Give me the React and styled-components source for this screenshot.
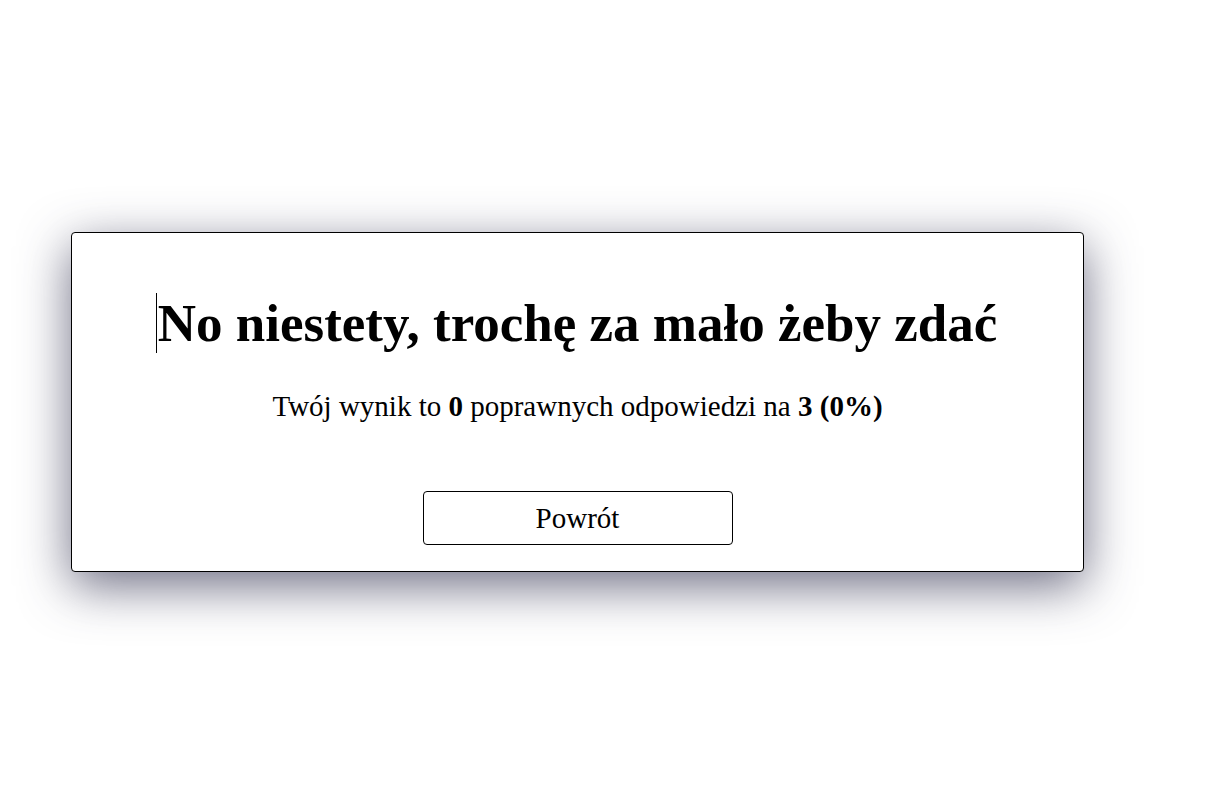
import styled, { createGlobalStyle } from 'styled-components'

const GlobalStyle = createGlobalStyle`
  html, body {
    margin: 0;
    background: #fff;
    font-family: "Liberation Serif", "Times New Roman", serif;
    color: #000;
  }
`

const Page = styled.div`
  min-height: 100vh;
  box-sizing: border-box;
  padding: 232px 0 0 71px;
`

const Card = styled.div`
  width: 1011px;
  height: 338px;
  border: 1px solid #000;
  border-radius: 4px;
  background: #fff;
  box-shadow: 0 14px 50px rgba(50, 50, 80, 0.7);
  display: flex;
  flex-direction: column;
  align-items: center;
`

const Title = styled.h1`
  position: relative;
  margin: 60px 0 0;
  font-size: 53px;
  font-weight: bold;
  line-height: 60px;
`

const Caret = styled.span`
  position: absolute;
  left: -2px;
  top: 0;
  width: 1px;
  height: 60px;
  background: #000;
`

const Score = styled.p`
  margin: 37px 0 0;
  font-size: 29px;
  line-height: 33px;
`

const BackButton = styled.button`
  margin-top: 68px;
  width: 310px;
  height: 54px;
  border: 1px solid #000;
  border-radius: 4px;
  background: #fff;
  font-family: inherit;
  font-size: 29px;
  color: #000;
  cursor: pointer;
`

const App = () => {
  const correct = 0
  const total = 3
  const percent = Math.round((correct / total) * 100)

  return (
    <Page>
      <GlobalStyle />
      <Card>
        <Title><Caret />No niestety, trochę za mało żeby zdać</Title>
        <Score>
          Twój wynik to <b>{correct}</b> poprawnych odpowiedzi na <b>{total} ({percent}%)</b>
        </Score>
        <BackButton>Powrót</BackButton>
      </Card>
    </Page>
  )
}

export default App
